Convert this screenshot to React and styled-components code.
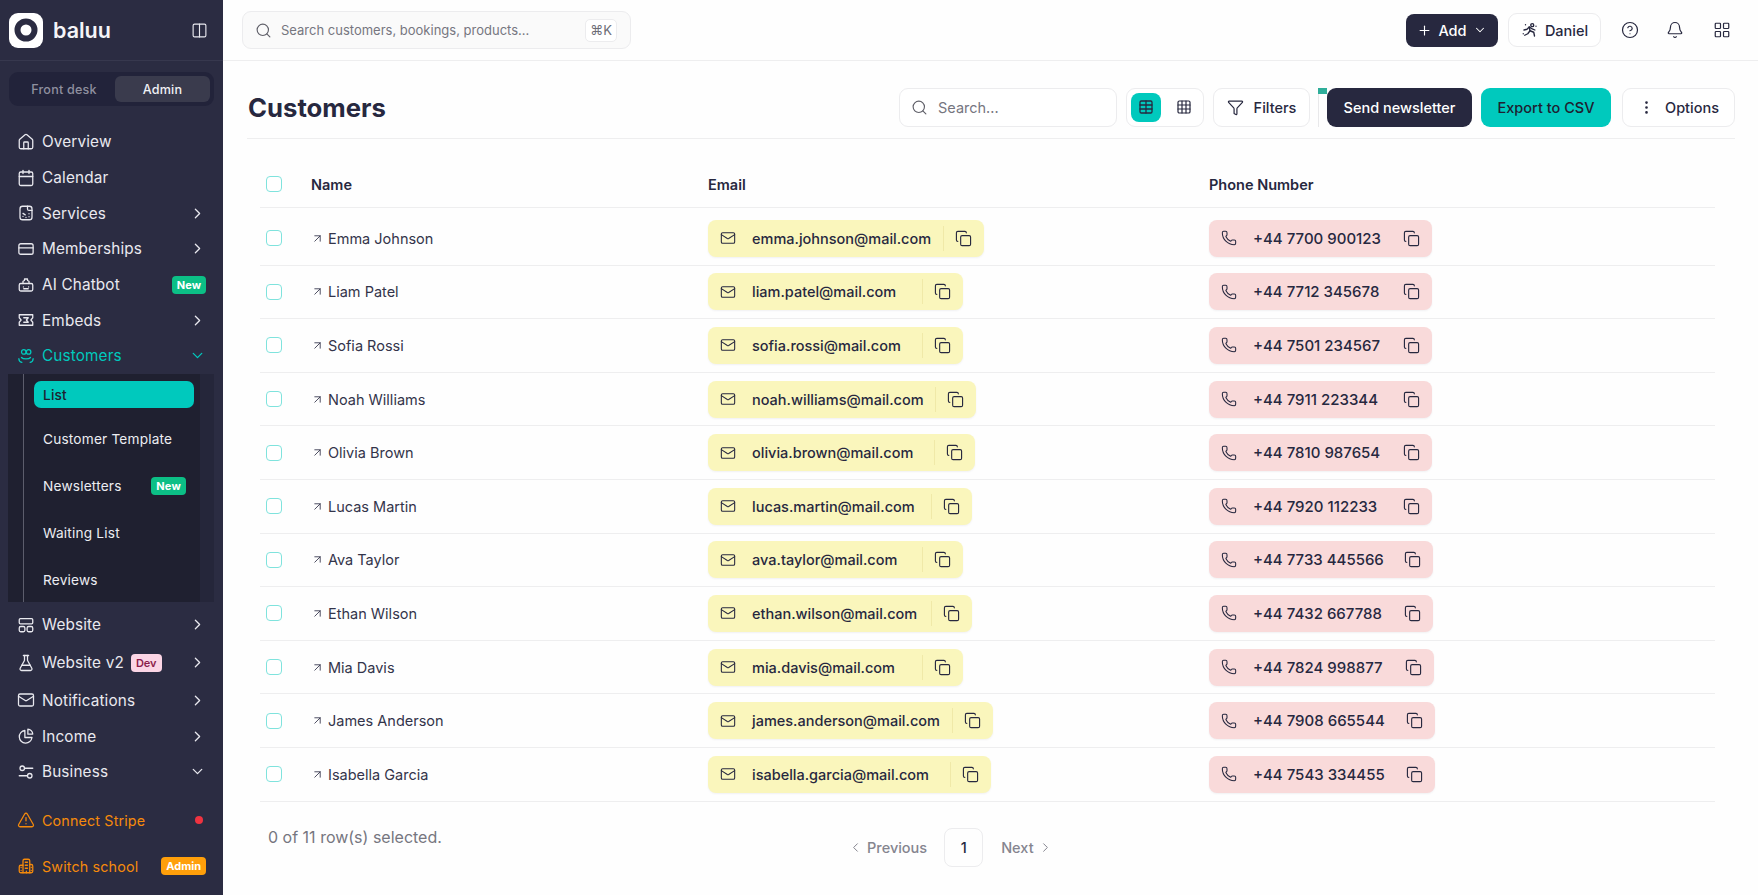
import React from 'react';
import styled, { createGlobalStyle } from 'styled-components';
import {
  ArrowUpRight,
  Bell,
  Calendar,
  ChevronDown,
  ChevronLeft,
  ChevronRight,
  CircleHelp,
  Columns2,
  Copy,
  EllipsisVertical,
  FlaskConical,
  Funnel,
  Grid3x3,
  House,
  LayoutGrid,
  Mail,
  Phone,
  Plus,
  Search,
  Table,
  TriangleAlert,
} from 'lucide-react';

const GlobalStyle = createGlobalStyle`
  html, body {
    margin: 0;
    height: 100%;
    background: #fefefe;
    font-family: Inter, "Noto Sans", sans-serif;
    color: #27283f;
    overflow: hidden;
  }
  * { box-sizing: border-box; }
`;

const Shell = styled.div`
  display: grid;
  grid-template-columns: 223px 1fr;
  height: 895px;
  overflow: hidden;
`;

/* sidebar */

const Sidebar = styled.aside`
  background: #2b2c42;
  color: #e9e9ef;
  display: flex;
  flex-direction: column;
`;

const Brand = styled.div`
  height: 61px;
  flex: none;
  display: flex;
  align-items: center;
  padding: 0 15px 0 9px;
  border-bottom: 1px solid #37384e;
`;

const LogoTile = styled.div`
  width: 34px;
  height: 35px;
  border-radius: 9px;
  background: #fff;
  display: flex;
  align-items: center;
  justify-content: center;
  flex: none;
`;

const BrandName = styled.span`
  font-size: 21.5px;
  font-weight: 600;
  margin-left: 10px;
  flex: 1;
  color: #f5f5f8;
`;

const ModeSwitch = styled.div`
  margin: 11px 9px 0;
  height: 34px;
  border-radius: 9px;
  background: #22233a;
  display: grid;
  grid-template-columns: 1fr 95px;
  padding: 4px;
  flex: none;
`;

const ModeButton = styled.div`
  display: flex;
  align-items: center;
  justify-content: center;
  border-radius: 6px;
  font-size: 12.6px;
  font-weight: 500;
  letter-spacing: 0.2px;
  color: ${({ $active }) => ($active ? '#f1f1f5' : '#8f909f')};
  background: ${({ $active }) => ($active ? '#3a3b4d' : 'transparent')};
`;

const Nav = styled.nav`
  margin-top: 18px;
  display: flex;
  flex-direction: column;
`;

const NavItem = styled.div`
  height: ${({ $tall }) => ($tall ? '40px' : '35.7px')};
  flex: none;
  display: flex;
  align-items: center;
  padding: 0 17px;
  gap: 7px;
  font-size: ${({ $small }) => ($small ? '14.3px' : '15.3px')};
  color: ${({ $tone }) => $tone || '#e9e9ef'};
  margin-top: ${({ $top }) => $top || 0}px;
`;

const NavLabel = styled.span`
  flex: ${({ $fit }) => ($fit ? 'none' : 1)};
  letter-spacing: 0.15px;
  white-space: nowrap;
`;

const NavSpacer = styled.span`
  flex: 1;
`;

const Badge = styled.span`
  font-size: 11px;
  font-weight: 700;
  height: 18px;
  padding: 0 5px;
  border-radius: 4px;
  display: inline-flex;
  align-items: center;
  color: ${({ $text }) => $text || '#fff'};
  background: ${({ $bg }) => $bg || '#0cbf86'};
  flex: none;
`;

const DevBadge = styled(Badge)`
  margin-left: 0;
  background: #fbd5e5;
  color: #8a1c4a;
  font-weight: 600;
`;

const StatusDot = styled.span`
  width: 8px;
  height: 8px;
  border-radius: 50%;
  background: #ef3340;
  margin-right: 3px;
  flex: none;
`;

const SubMenu = styled.div`
  height: 228px;
  margin: 0 9px 0 8px;
  padding: 7.5px 0 0 26px;
  background: linear-gradient(90deg, #1f2030 0, #1f2030 192px, #25263a 192px);
  overflow: hidden;
  position: relative;
  flex: none;

  &::before {
    content: '';
    position: absolute;
    left: 15px;
    top: 0;
    bottom: 0;
    width: 1px;
    background: #5c5d6c;
  }
`;

const SubItem = styled.div`
  height: 47px;
  width: 160px;
  display: flex;
  align-items: center;
  justify-content: space-between;
  padding: 0 8px 0 9px;
  font-size: 13.65px;
  letter-spacing: 0.2px;
  color: #ecedf2;
`;

const SubActive = styled(SubItem)`
  height: 27px;
  margin-bottom: 7px;
  background: #00c9bd;
  border-radius: 7px;
  color: #1f2030;
  font-weight: 500;
`;

/* top bar */

const Main = styled.main`
  display: flex;
  flex-direction: column;
  min-width: 0;
`;

const TopBar = styled.header`
  height: 61px;
  flex: none;
  display: flex;
  align-items: center;
  border-bottom: 1px solid #eeeeef;
  padding: 0 26px 0 19px;
`;

const GlobalSearch = styled.div`
  width: 389px;
  height: 38px;
  border: 1px solid #ececee;
  border-radius: 9px;
  background: #fafafa;
  display: flex;
  align-items: center;
  padding: 0 13px 0 12px;
  gap: 9px;
  font-size: 13px;
  color: #76767f;
`;

const Grow = styled.span`
  flex: 1;
  white-space: nowrap;
`;

const Kbd = styled.span`
  width: 32px;
  height: 23px;
  border: 1px solid #ececee;
  border-radius: 5px;
  background: #fff;
  display: flex;
  align-items: center;
  justify-content: center;
  font-size: 13px;
  color: #6d6d76;
`;

const TopActions = styled.div`
  margin-left: auto;
  display: flex;
  align-items: center;
`;

const AddButton = styled.div`
  width: 92px;
  height: 33px;
  border-radius: 8px;
  background: #27283f;
  color: #fff;
  display: flex;
  align-items: center;
  justify-content: center;
  gap: 6px;
  font-size: 14.5px;
  font-weight: 500;
`;

const UserButton = styled.div`
  width: 93px;
  height: 34px;
  margin-left: 10px;
  border: 1px solid #ececee;
  border-radius: 9px;
  background: #fff;
  display: flex;
  align-items: center;
  justify-content: center;
  gap: 6px;
  font-size: 14.5px;
  font-weight: 500;
`;

const IconSlot = styled.span`
  width: 20px;
  display: flex;
  justify-content: center;
  margin-left: ${({ $gap }) => $gap}px;
`;

/* page */

const Content = styled.div`
  padding: 0 23px 0 24px;
  display: flex;
  flex-direction: column;
`;

const TitleRow = styled.div`
  height: 78px;
  display: flex;
  align-items: center;
  gap: 9px;
  padding-top: 15px;
  border-bottom: 1px solid #eeeeef;
`;

const Title = styled.h1`
  margin: 0 0 0 1px;
  flex: 1;
  font-size: 25.7px;
  font-weight: 700;
  color: #27283f;
`;

const Control = styled.div`
  height: 39px;
  width: ${({ $w }) => $w}px;
  flex: none;
  border: 1px solid #ececee;
  border-radius: 9px;
  background: #fff;
  display: flex;
  align-items: center;
  justify-content: center;
  gap: 10px;
  font-size: 14.5px;
  font-weight: 500;
  color: #27283f;
`;

const SearchField = styled(Control)`
  justify-content: flex-start;
  padding-left: 11px;
  font-weight: 400;
  color: #76767f;
`;

const ViewToggle = styled(Control)`
  justify-content: flex-start;
  gap: 8px;
  padding-left: 4px;
`;

const ViewTile = styled.span`
  width: 30px;
  height: 29px;
  border-radius: 8px;
  display: flex;
  align-items: center;
  justify-content: center;
  background: ${({ $active }) => ($active ? '#00c9bd' : 'transparent')};
`;

const Solid = styled(Control)`
  border: 0;
  background: ${({ $bg }) => $bg};
  color: ${({ $fg }) => $fg};
`;

const OptionsButton = styled(Control)`
  margin-left: 2px;
`;

const Rule = styled.span`
  width: 1px;
  height: 39px;
  flex: none;
  margin: 0 -1px;
  background: #e8e8ea;
  position: relative;

  &::after {
    content: '';
    position: absolute;
    left: 0;
    top: 0;
    width: 9px;
    height: 6px;
    background: #2fae9a;
  }
`;

const TableBox = styled.div`
  padding: 0 20px 0 13px;
`;

const Grid = styled.div`
  display: grid;
  grid-template-columns: 45px 397px 501px 1fr;
  align-items: center;
  padding-left: 6px;
  border-bottom: 1px solid #eeeeef;
`;

const HeadRow = styled(Grid)`
  height: 69px;
  padding-top: 22px;
  margin-bottom: 4px;
  font-size: 14.5px;
  font-weight: 600;
  color: #27283f;
`;

const Row = styled(Grid)`
  height: 53.6px;
`;

const Check = styled.span`
  width: 16px;
  height: 16px;
  border: 1.5px solid #7fe3dd;
  border-radius: 4px;
  background: #fff;
`;

const NameCell = styled.div`
  display: flex;
  align-items: center;
  gap: 4px;
  font-size: 14.5px;
  color: #33344a;
`;

const Chip = styled.div`
  display: inline-flex;
  align-items: center;
  justify-self: start;
  width: ${({ $w }) => $w}px;
  height: 37px;
  border-radius: 8px;
  background: ${({ $bg }) => $bg};
  font-size: ${({ $size }) => $size}px;
  font-weight: 500;
  color: #27283f;
  padding: 0 12px 0 12px;
  box-shadow: 0 1px 2px rgba(40, 40, 60, 0.06);
`;

const ChipText = styled.span`
  flex: 1;
  margin-left: ${({ $gap }) => $gap}px;
  white-space: nowrap;
`;

const ChipCopy = styled.span`
  display: flex;
  align-items: center;
  height: 25px;
  padding-left: ${({ $pad }) => $pad}px;
  border-left: 1px solid ${({ $line }) => $line};
`;

const Footer = styled.div`
  display: flex;
  align-items: flex-start;
  padding: 25px 0 0 8px;
`;

const Selected = styled.div`
  width: 580px;
  line-height: 20px;
  font-size: 16px;
  color: #76767f;
`;

const Pager = styled.div`
  display: flex;
  align-items: center;
  padding-top: 1px;
  font-size: 14.5px;
  font-weight: 500;
  color: #85858f;
  gap: 4px;
`;

const PageBox = styled.span`
  width: 39px;
  height: 39px;
  margin: 0 14px 0 13px;
  border: 1px solid #ececee;
  border-radius: 8px;
  color: #27283f;
  display: flex;
  align-items: center;
  justify-content: center;
`;

/* icons the packages do not carry */

const Svg = ({ size = 18, children, w = 1.7 }) => (
  <svg
    width={size}
    height={size}
    viewBox="0 0 24 24"
    fill="none"
    stroke="currentColor"
    strokeWidth={w}
    strokeLinecap="round"
    strokeLinejoin="round"
  >
    {children}
  </svg>
);

const ServicesIcon = () => (
  <Svg>
    <rect x="4" y="3" width="16" height="18" rx="3.500" />
    <path d="M14 3v3.500a2 2 0 0 0 2 2h4" />
    <path d="M8 16.500h.01M12 18h.01M16 13h.01M16 17h.01M8 12.500l3 2" />
  </Svg>
);

const CardIcon = () => (
  <Svg>
    <rect x="2.500" y="5" width="19" height="14" rx="2.500" />
    <path d="M2.500 10.500h19" />
  </Svg>
);

const BotIcon = () => (
  <Svg>
    <path d="M8 10V7l2-1V4h4v2l2 1v3" />
    <path d="M5 10h14a2 2 0 0 1 2 2v6a2 2 0 0 1-2 2H5a2 2 0 0 1-2-2v-6a2 2 0 0 1 2-2Z" />
    <path d="M8.500 14.500h.01M15.500 14.500h.01M9 17h6" />
  </Svg>
);

const EmbedIcon = () => (
  <Svg>
    <path d="M3 5h18v4l-2.500 3 2.500 3v4H3v-4l2.500-3L3 9V5Z" />
    <path d="M9 9h6l-2.500 3 2.500 3H9" />
  </Svg>
);

const UsersIcon = () => (
  <Svg>
    <circle cx="9" cy="6.500" r="3" />
    <circle cx="15.500" cy="6.500" r="3" />
    <path d="M2.500 15.500c0 3 2 4.500 4 5M21.500 15.500c0 3-2 4.500-4 5" />
    <path d="M6 14c2 2.600 10 2.600 12 0" />
  </Svg>
);

const WebsiteIcon = () => (
  <Svg>
    <rect x="3" y="3.500" width="18" height="7" rx="1.500" />
    <rect x="3" y="14" width="7.500" height="7" rx="2" />
    <rect x="13.500" y="14" width="7.500" height="7" rx="2" />
  </Svg>
);

const IncomeIcon = () => (
  <Svg>
    <path d="M10.500 4.500a8.500 8.500 0 1 0 9.500 9.500h-9.500V4.500Z" />
    <path d="M14.500 3a6.800 6.800 0 0 1 6.500 6.500h-6.500V3Z" />
  </Svg>
);

const SlidersIcon = () => (
  <Svg>
    <circle cx="7" cy="7" r="3" />
    <path d="M10 7h11" />
    <circle cx="17" cy="17" r="3" />
    <path d="M14 17H3" />
  </Svg>
);

const SchoolIcon = () => (
  <Svg>
    <path d="M8 21V5a2 2 0 0 1 2-2h5a2 2 0 0 1 2 2v16" />
    <path d="M8 11H5a2 2 0 0 0-2 2v6a2 2 0 0 0 2 2h14a2 2 0 0 0 2-2v-7a2 2 0 0 0-2-2h-2" />
    <path d="M11 7h3M11 11h3M11 15h3M12.500 21v-2M5.500 14h.01M5.500 18h.01M19 14h.01M19 18h.01" />
  </Svg>
);

const SparkPerson = () => (
  <Svg size={18} w={1.8}>
    <circle cx="15" cy="5.500" r="2" />
    <path d="M4 12l4-1 3-3 4 2.500 3.500 1.500" />
    <path d="M11 8l1 5-3 4-4 2" />
    <path d="M12 13l5 2 1 5" />
    <path d="M6 5h.01M3 17h.01M20 7h.01" />
  </Svg>
);

const customers = [
  ['Emma Johnson', 'emma.johnson@mail.com', '+44 7700 900123', 276, 223],
  ['Liam Patel', 'liam.patel@mail.com', '+44 7712 345678', 255, 223],
  ['Sofia Rossi', 'sofia.rossi@mail.com', '+44 7501 234567', 255, 223],
  ['Noah Williams', 'noah.williams@mail.com', '+44 7911 223344', 268, 223],
  ['Olivia Brown', 'olivia.brown@mail.com', '+44 7810 987654', 267, 223],
  ['Lucas Martin', 'lucas.martin@mail.com', '+44 7920 112233', 264, 223],
  ['Ava Taylor', 'ava.taylor@mail.com', '+44 7733 445566', 255, 224],
  ['Ethan Wilson', 'ethan.wilson@mail.com', '+44 7432 667788', 264, 224],
  ['Mia Davis', 'mia.davis@mail.com', '+44 7824 998877', 255, 225],
  ['James Anderson', 'james.anderson@mail.com', '+44 7908 665544', 285, 226],
  ['Isabella Garcia', 'isabella.garcia@mail.com', '+44 7543 334455', 283, 226],
];

const Icon18 = (Cmp) => <Cmp size={18} strokeWidth={1.7} />;
const more = <ChevronRight size={17} strokeWidth={1.8} />;
const less = <ChevronDown size={17} strokeWidth={1.8} />;

const App = () => (
  <Shell>
    <GlobalStyle />
    <Sidebar>
      <Brand>
        <LogoTile>
          <svg width="24" height="24" viewBox="0 0 24 24">
            <circle cx="12" cy="12" r="8.500" fill="none" stroke="#2b2c42" strokeWidth="6" />
          </svg>
        </LogoTile>
        <BrandName>baluu</BrandName>
        <Columns2 size={17} strokeWidth={1.6} />
      </Brand>
      <ModeSwitch>
        <ModeButton>Front desk</ModeButton>
        <ModeButton $active>Admin</ModeButton>
      </ModeSwitch>
      <Nav>
        <NavItem>{Icon18(House)}<NavLabel>Overview</NavLabel></NavItem>
        <NavItem>{Icon18(Calendar)}<NavLabel>Calendar</NavLabel></NavItem>
        <NavItem><ServicesIcon /><NavLabel>Services</NavLabel>{more}</NavItem>
        <NavItem><CardIcon /><NavLabel>Memberships</NavLabel>{more}</NavItem>
        <NavItem><BotIcon /><NavLabel>AI Chatbot</NavLabel><Badge>New</Badge></NavItem>
        <NavItem><EmbedIcon /><NavLabel>Embeds</NavLabel>{more}</NavItem>
        <NavItem $tone="#00c9bd"><UsersIcon /><NavLabel>Customers</NavLabel>{less}</NavItem>
        <SubMenu>
          <SubActive>List</SubActive>
          <SubItem>Customer Template</SubItem>
          <SubItem>Newsletters<Badge>New</Badge></SubItem>
          <SubItem>Waiting List</SubItem>
          <SubItem>Reviews</SubItem>
        </SubMenu>
        <NavItem $top={5}><WebsiteIcon /><NavLabel>Website</NavLabel>{more}</NavItem>
        <NavItem $tall>
          {Icon18(FlaskConical)}
          <NavLabel $fit>Website v2</NavLabel>
          <DevBadge>Dev</DevBadge>
          <NavSpacer />
          {more}
        </NavItem>
        <NavItem>{Icon18(Mail)}<NavLabel>Notifications</NavLabel>{more}</NavItem>
        <NavItem><IncomeIcon /><NavLabel>Income</NavLabel>{more}</NavItem>
        <NavItem><SlidersIcon /><NavLabel>Business</NavLabel>{less}</NavItem>
        <NavItem $small $tone="#f58a0b" $top={13}>
          {Icon18(TriangleAlert)}
          <NavLabel>Connect Stripe</NavLabel>
          <StatusDot />
        </NavItem>
        <NavItem $small $tone="#f58a0b" $top={10}>
          <SchoolIcon />
          <NavLabel>Switch school</NavLabel>
          <Badge $bg="#ff9f0a">Admin</Badge>
        </NavItem>
      </Nav>
    </Sidebar>
    <Main>
      <TopBar>
        <GlobalSearch>
          <Search size={17} strokeWidth={1.6} color="#5f5f68" />
          <Grow>Search customers, bookings, products...</Grow>
          <Kbd>⌘K</Kbd>
        </GlobalSearch>
        <TopActions>
          <AddButton>
            <Plus size={15} strokeWidth={1.8} />
            Add
            <ChevronDown size={14} strokeWidth={1.8} />
          </AddButton>
          <UserButton>
            <SparkPerson />
            Daniel
          </UserButton>
          <IconSlot $gap={19}><CircleHelp size={18} strokeWidth={1.6} /></IconSlot>
          <IconSlot $gap={25}><Bell size={18} strokeWidth={1.6} /></IconSlot>
          <IconSlot $gap={27}><LayoutGrid size={18} strokeWidth={1.6} /></IconSlot>
        </TopActions>
      </TopBar>
      <Content>
        <TitleRow>
          <Title>Customers</Title>
          <SearchField $w={218}>
            <Search size={17} strokeWidth={1.6} color="#5f5f68" />
            Search...
          </SearchField>
          <ViewToggle $w={78}>
            <ViewTile $active><Table size={16} strokeWidth={1.9} /></ViewTile>
            <ViewTile><Grid3x3 size={16} strokeWidth={1.8} /></ViewTile>
          </ViewToggle>
          <Control $w={97}>
            <Funnel size={17} strokeWidth={1.7} />
            Filters
          </Control>
          <Rule />
          <Solid $w={145} $bg="#27283f" $fg="#fff">Send newsletter</Solid>
          <Solid $w={130} $bg="#00c9bd" $fg="#1f2030">Export to CSV</Solid>
          <OptionsButton $w={113}>
            <EllipsisVertical size={17} strokeWidth={1.8} />
            Options
          </OptionsButton>
        </TitleRow>
        <TableBox>
          <HeadRow>
            <Check />
            <span>Name</span>
            <span>Email</span>
            <span>Phone Number</span>
          </HeadRow>
          {customers.map(([name, email, phone, emailWidth, phoneWidth]) => (
            <Row key={email}>
              <Check />
              <NameCell>
                <ArrowUpRight size={13} strokeWidth={1.6} />
                {name}
              </NameCell>
              <Chip $bg="#faf6bc" $w={emailWidth} $size={14.5}>
                <Mail size={16} strokeWidth={1.6} />
                <ChipText $gap={16}>{email}</ChipText>
                <ChipCopy $pad={11} $line="#f0e9a8">
                  <Copy size={17} strokeWidth={1.6} />
                </ChipCopy>
              </Chip>
              <Chip $bg="#f9dada" $w={phoneWidth} $size={15}>
                <Phone size={16} strokeWidth={1.6} />
                <ChipText $gap={16}>{phone}</ChipText>
                <ChipCopy $pad={0} $line="transparent">
                  <Copy size={17} strokeWidth={1.6} />
                </ChipCopy>
              </Chip>
            </Row>
          ))}
          <Footer>
            <Selected>0 of 11 row(s) selected.</Selected>
            <Pager>
              <ChevronLeft size={15} strokeWidth={1.6} />
              Previous
              <PageBox>1</PageBox>
              Next
              <ChevronRight size={15} strokeWidth={1.6} />
            </Pager>
          </Footer>
        </TableBox>
      </Content>
    </Main>
  </Shell>
);

export default App;
